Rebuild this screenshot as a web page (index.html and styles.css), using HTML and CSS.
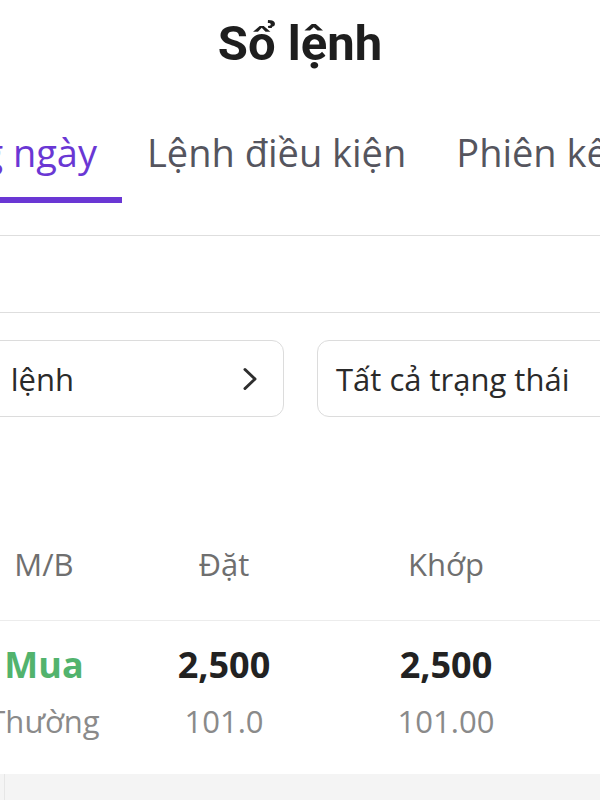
FILE: index.html
```html
<!DOCTYPE html>
<html lang="vi">
<head>
<meta charset="utf-8">
<title>Sổ lệnh</title>
<link rel="stylesheet" href="styles.css">
</head>
<body>
<div class="screen">
  <header class="topbar">
    <h1 class="title">Sổ lệnh</h1>
  </header>

  <nav class="tabs">
    <div class="tab tab-active"><span class="tab-label">Lệnh trong ngày</span></div>
    <div class="tab"><span class="tab-label">Lệnh điều kiện</span></div>
    <div class="tab"><span class="tab-label">Phiên kế tiếp</span></div>
  </nav>

  <div class="blank-band"></div>

  <section class="filters">
    <div class="filter filter-left">
      <span class="filter-text filter-text-right">Loại lệnh</span>
      <svg class="chev" width="16" height="24" viewBox="0 0 16 24" aria-hidden="true">
        <path d="M3 2.5 L13 12 L3 21.5" fill="none" stroke="#2e2e2e" stroke-width="3" stroke-linecap="round" stroke-linejoin="round"/>
      </svg>
    </div>
    <div class="filter filter-right">
      <span class="filter-text">Tất cả trạng thái</span>
    </div>
  </section>

  <div class="grid head-row">
    <div class="cell">M/B</div>
    <div class="cell">Đặt</div>
    <div class="cell">Khớp</div>
  </div>

  <div class="grid data-row">
    <div class="cell">
      <div class="buy">Mua</div>
      <div class="sub">Thường</div>
    </div>
    <div class="cell">
      <div class="qty">2,500</div>
      <div class="sub">101.0</div>
    </div>
    <div class="cell">
      <div class="qty">2,500</div>
      <div class="sub">101.00</div>
    </div>
  </div>

  <div class="footer-band"><div class="footer-card"></div></div>
</div>
</body>
</html>
```

FILE: styles.css
```css
* { box-sizing: border-box; }

html, body {
  margin: 0;
  padding: 0;
  background: #ffffff;
}

body {
  width: 600px;
  height: 800px;
  overflow: hidden;
  font-family: "Open Sans", "Noto Sans", sans-serif;
  color: #222;
}

.screen {
  width: 600px;
  overflow: hidden;
}

.topbar {
  height: 88px;
  display: flex;
  align-items: center;
  justify-content: center;
}

.title {
  margin: 0;
  font-family: Roboto, "Liberation Sans", sans-serif;
  font-weight: 700;
  font-size: 49px;
  line-height: 86px;
  color: #1e1e1e;
}

.tabs {
  display: flex;
  padding-top: 39px;
  padding-bottom: 32px;
  margin-left: -328px;
  border-bottom: 1px solid #dedede;
  width: 1100px;
}

.tab {
  flex: none;
  padding: 0 25px;
  display: flex;
  flex-direction: column;
}

.tab::after {
  content: "";
  display: block;
  height: 6px;
  margin-top: 20px;
  background: transparent;
}

.tab-active {
  width: 450px;
  text-align: right;
}

.tab-active::after {
  background: #6a37d4;
  margin-left: -25px;
  margin-right: -25px;
}

.tab-label {
  font-size: 38px;
  font-weight: 500;
  line-height: 50px;
  color: #55555e;
  white-space: nowrap;
}

.tab-active .tab-label {
  color: #6a37d4;
}

.blank-band {
  height: 77px;
  border-bottom: 1px solid #dedede;
}

.filters {
  display: flex;
  gap: 33px;
  margin-left: -116px;
  padding-top: 27px;
  padding-bottom: 90px;
  width: 900px;
}

.filter {
  flex: none;
  height: 77px;
  border: 1px solid #dcdcdc;
  border-radius: 12px;
  display: flex;
  align-items: center;
  padding: 0 18px;
}

.filter-left {
  width: 400px;
  padding-right: 25px;
}

.filter-right {
  width: 320px;
}

.filter-text {
  font-size: 31px;
  line-height: 40px;
  color: #2a2a2a;
  white-space: nowrap;
}

.filter-text-right {
  width: 171px;
  text-align: right;
  direction: rtl;
  unicode-bidi: plaintext;
  word-spacing: 8px;
}

.chev {
  margin-left: auto;
  display: block;
}

.grid {
  display: grid;
  grid-template-columns: 88px 272px 172px 1fr;
  text-align: center;
}

.head-row {
  height: 114px;
  align-items: center;
  border-bottom: 1px solid #ececec;
  font-size: 31px;
  color: #6f6f6f;
}

.head-row .cell {
  line-height: 40px;
  white-space: nowrap;
}

.data-row {
  padding-top: 24px;
  height: 153px;
}

.data-row .cell {
  display: flex;
  flex-direction: column;
  align-items: center;
  gap: 16px;
  white-space: nowrap;
}

.buy {
  font-size: 36px;
  font-weight: 700;
  line-height: 40px;
  color: #52b36d;
}

.qty {
  font-size: 36px;
  font-weight: 700;
  line-height: 40px;
  color: #222;
}

.sub {
  font-size: 31px;
  line-height: 40px;
  color: #8a8a8a;
}

.footer-band {
  height: 40px;
  background: #f4f4f4;
  padding-left: 4px;
}

.footer-card {
  height: 100%;
  border-left: 1px solid #e6e6e6;
}
```
